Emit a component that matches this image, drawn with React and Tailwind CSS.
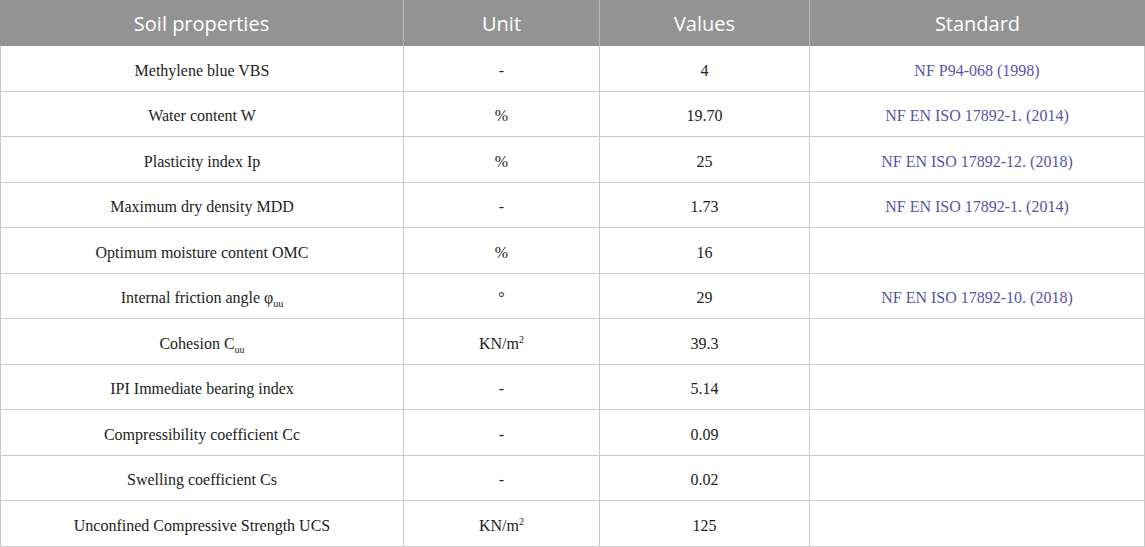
import React from "react";

const Sub = ({ children }) => <span className="text-[10px] relative top-[4px]">{children}</span>;
const Sup = ({ children }) => <span className="text-[10px] relative top-[-6px]">{children}</span>;

const rows = [
  [<>Methylene blue VBS</>, "-", "4", "NF P94-068 (1998)"],
  [<>Water content W</>, "%", "19.70", "NF EN ISO 17892-1. (2014)"],
  [<>Plasticity index Ip</>, "%", "25", "NF EN ISO 17892-12. (2018)"],
  [<>Maximum dry density MDD</>, "-", "1.73", "NF EN ISO 17892-1. (2014)"],
  [<>Optimum moisture content OMC</>, "%", "16", ""],
  [<>Internal friction angle φ<Sub>uu</Sub></>, "°", "29", "NF EN ISO 17892-10. (2018)"],
  [<>Cohesion C<Sub>uu</Sub></>, <>KN/m<Sup>2</Sup></>, "39.3", ""],
  [<>IPI Immediate bearing index</>, "-", "5.14", ""],
  [<>Compressibility coefficient Cc</>, "-", "0.09", ""],
  [<>Swelling coefficient Cs</>, "-", "0.02", ""],
  [<>Unconfined Compressive Strength UCS</>, <>KN/m<Sup>2</Sup></>, "125", ""],
];

const cols = "grid grid-cols-[403px_196px_210px_336px]";

export default function App() {
  return (
    <div className="w-[1145px] h-[547px] bg-white overflow-hidden">
      <div className={`${cols} h-[46px] bg-[#939393] text-white text-[20px] font-['Open_Sans',sans-serif]`}>
        {["Soil properties", "Unit", "Values", "Standard"].map((h, i) => (
          <div key={i} className={`flex items-center justify-center pt-[1px] ${i > 0 ? "border-l border-[#b8b8b8]" : ""}`}>
            {h}
          </div>
        ))}
      </div>
      {rows.map((r, ri) => (
        <div key={ri} className={`${cols} h-[45.5px] border-b border-[#cccccc] text-[16px] text-[#222] font-['Liberation_Serif',serif]`}>
          {r.map((c, ci) => (
            <div
              key={ci}
              className={`flex items-center justify-center pt-[5px] border-l border-[#c8c8c8] ${ci === 3 ? "border-r text-[#5555a8]" : ""}`}
            >
              <span>{c}</span>
            </div>
          ))}
        </div>
      ))}
    </div>
  );
}
